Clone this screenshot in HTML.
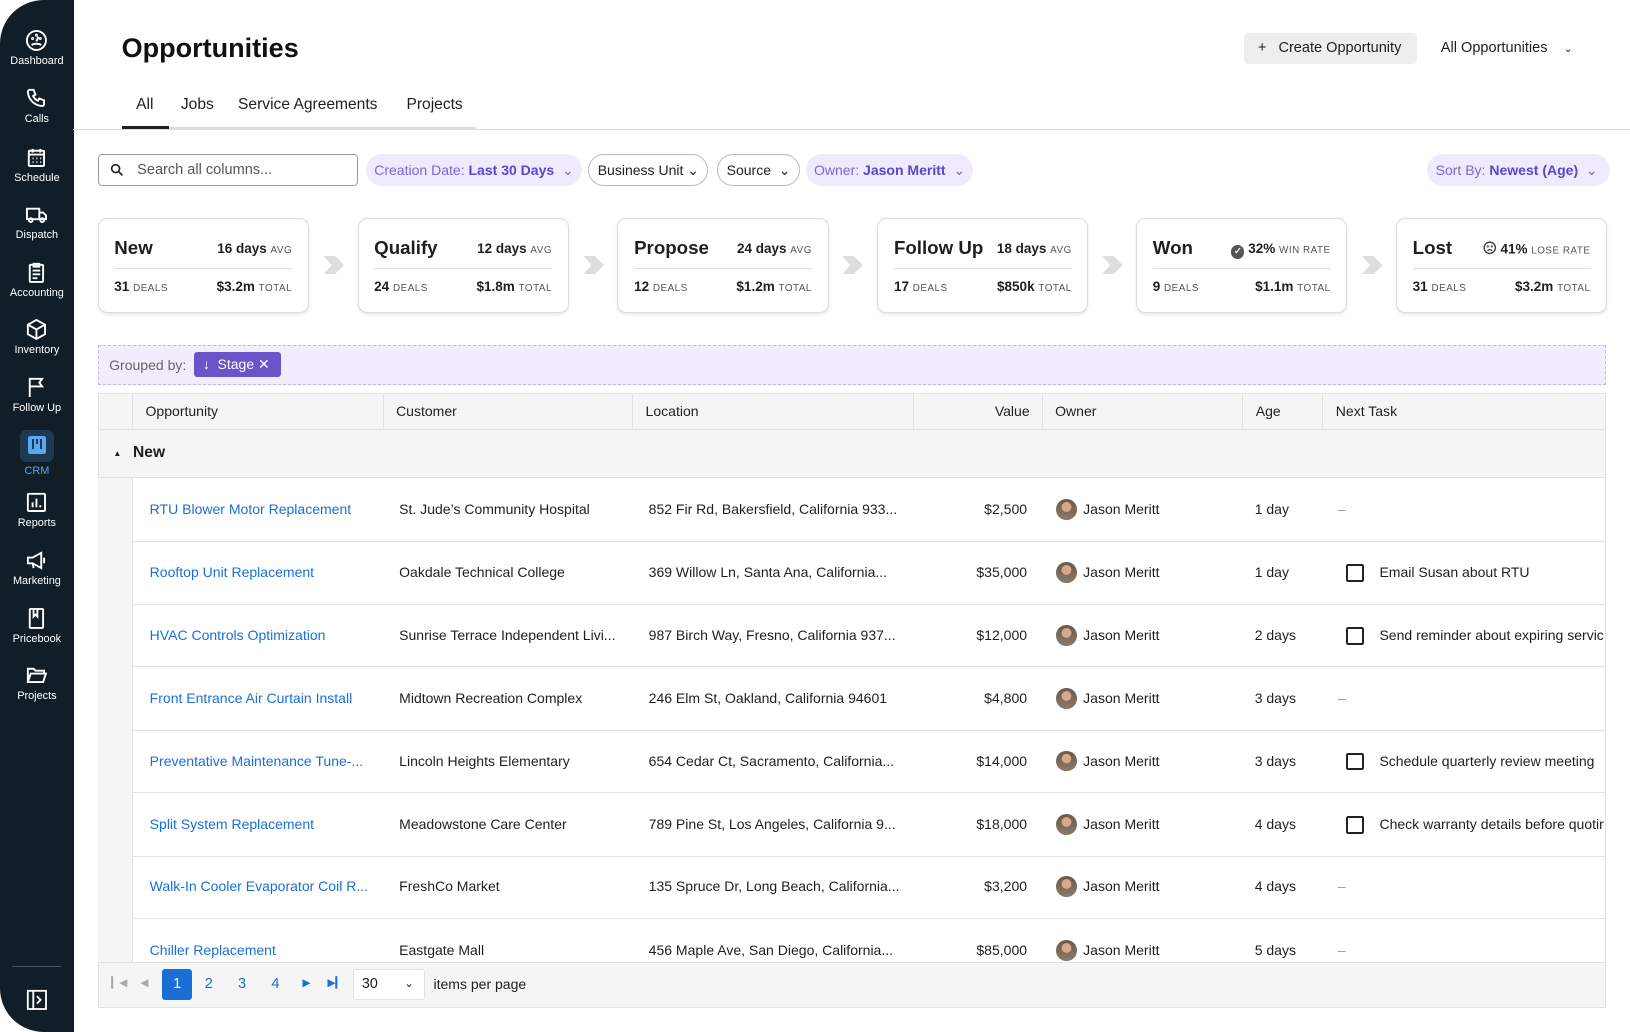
<!DOCTYPE html>
<html><head><meta charset="utf-8"><style>
*{box-sizing:border-box;margin:0;padding:0}
html,body{width:1630px;height:1032px;overflow:hidden;background:#fff}
body{font-family:"Liberation Sans",sans-serif;color:#1f1f1f}
#w{position:absolute;left:0;top:0;width:1568px;height:993px;zoom:1.03954}
.a{position:absolute;white-space:nowrap}
#sb{position:absolute;left:0;top:0;width:71px;height:993px;background:#111e27;border-radius:42px 0 0 42px}
.ni{position:absolute;left:0;width:71px;text-align:center;color:#fff;font-size:10.5px}
.ni svg{display:block;margin:0 auto 3px}
.tab{font-size:15px;top:92px}
.chip{position:absolute;top:148px;height:31px;border-radius:16px;font-size:13.5px;line-height:31px;padding:0 8px;white-space:nowrap}
.pu{background:#efeafd;color:#7a66d9}.pu b{color:#5b46c9}
.ol{border:1px solid #bbb;line-height:29px;color:#222}
.card{position:absolute;top:210px;width:203px;height:91px;border:1px solid #ddd;border-radius:9px;box-shadow:0 1px 3px rgba(0,0,0,.1);background:#fff}
.card .t{position:absolute;left:15px;top:17px;font-size:18px;font-weight:bold}
.card .r{position:absolute;right:15px;top:21px;font-size:13px;font-weight:bold}
.card small{font-size:9.5px;font-weight:normal;color:#555;letter-spacing:.5px}
.card hr{position:absolute;left:15px;right:15px;top:47px;border:0;border-top:1px solid #ddd}
.card .bl{position:absolute;left:15px;top:57px;font-size:13px;font-weight:bold}
.card .br{position:absolute;right:15px;top:57px;font-size:13px;font-weight:bold}
.arr{position:absolute;top:246px;width:20px;height:18px;background:#ddd;clip-path:polygon(0 0,55% 0,100% 50%,55% 100%,0 100%,40% 50%)}
.row{position:absolute;left:94px;width:1451px;height:61px;border-bottom:1px solid #e2e2e2;font-size:13.5px}
.row .g{position:absolute;left:0;top:0;width:34px;height:61px;background:#f5f5f5;border-right:1px solid #e2e2e2}
.row span{position:absolute;top:22px;white-space:nowrap}
.lk{color:#1a6fd6}
.av{width:20px;height:20px;border-radius:50%;background:radial-gradient(circle at 50% 38%,#d7a88a 0 28%,transparent 30%),linear-gradient(#6b5a4c,#8a7a6a);top:20px!important}
.cb{width:17px;height:17px;border:2px solid #222;border-radius:2px;top:22px!important}
.hd{position:absolute;top:379px;font-size:13.5px}
.vd{position:absolute;top:379px;width:1px;height:34px;background:#e2e2e2}
</style></head><body><div id="w">
<div id="sb">
<div class="ni" style="top:28px"><svg width="22" height="22" viewBox="0 0 24 24" fill="none" stroke="#fff" stroke-width="2"><circle cx="12" cy="12" r="10"/><path d="M12 13l2-5M7 17c2-2 8-2 10 0"/><circle cx="8" cy="10" r=".6"/><circle cx="16" cy="10" r=".6"/><circle cx="12" cy="6.5" r=".6"/></svg>Dashboard</div>
<div class="ni" style="top:84px"><svg width="22" height="22" viewBox="0 0 24 24" fill="none" stroke="#fff" stroke-width="2"><path d="M5 3h4l2 5-2.5 1.5a11 11 0 005 5L15 12l5 2v4a2 2 0 01-2 2A16 16 0 013 5a2 2 0 012-2"/></svg>Calls</div>
<div class="ni" style="top:140px"><svg width="22" height="22" viewBox="0 0 24 24" fill="none" stroke="#fff" stroke-width="2"><rect x="4" y="5" width="16" height="16" rx="1"/><path d="M4 9h16M8 3v4M16 3v4M8 13h1M12 13h1M16 13h1M8 17h1M12 17h1M16 17h1"/></svg>Schedule</div>
<div class="ni" style="top:195px"><svg width="24" height="22" viewBox="0 0 24 24" fill="none" stroke="#fff" stroke-width="2"><path d="M2 6h13v11H2zM15 10h4l3 3v4h-7"/><circle cx="6" cy="18" r="2"/><circle cx="18" cy="18" r="2"/></svg>Dispatch</div>
<div class="ni" style="top:251px"><svg width="22" height="22" viewBox="0 0 24 24" fill="none" stroke="#fff" stroke-width="2"><rect x="5" y="4" width="14" height="18" rx="1"/><path d="M9 3h6v3H9zM8 10h8M8 14h8M8 18h5"/></svg>Accounting</div>
<div class="ni" style="top:306px"><svg width="22" height="22" viewBox="0 0 24 24" fill="none" stroke="#fff" stroke-width="2"><path d="M12 2l9 5v10l-9 5-9-5V7zM3 7l9 5 9-5M12 12v10"/></svg>Inventory</div>
<div class="ni" style="top:362px"><svg width="22" height="22" viewBox="0 0 24 24" fill="none" stroke="#fff" stroke-width="2"><path d="M5 22V3h13l-3 4 3 4H5"/></svg>Follow Up</div>
<div class="ni" style="top:414px;color:#5aa6f0"><div style="width:32px;height:30px;margin:0 auto 3px;background:#1e3a52;border-radius:6px;padding:5px 7px"><div style="width:18px;height:18px;background:#5aa6f0;border-radius:2px;position:relative"><i style="position:absolute;left:4px;top:3px;width:2px;height:10px;background:#1e3a52"></i><i style="position:absolute;left:8px;top:3px;width:2px;height:5px;background:#1e3a52"></i><i style="position:absolute;left:12px;top:3px;width:2px;height:10px;background:#1e3a52"></i></div></div>CRM</div>
<div class="ni" style="top:472px"><svg width="22" height="22" viewBox="0 0 24 24" fill="none" stroke="#fff" stroke-width="2"><rect x="3" y="3" width="18" height="18" rx="1"/><path d="M8 17v-5M12 17V8M16 17v-2"/></svg>Reports</div>
<div class="ni" style="top:528px"><svg width="24" height="22" viewBox="0 0 24 24" fill="none" stroke="#fff" stroke-width="2"><path d="M3 9h5l9-5v16l-9-5H3zM8 15l1 5M20 9v6"/></svg>Marketing</div>
<div class="ni" style="top:584px"><svg width="22" height="22" viewBox="0 0 24 24" fill="none" stroke="#fff" stroke-width="2"><rect x="5" y="2" width="14" height="20" rx="1"/><path d="M9 2v8l2-2 2 2V2"/></svg>Pricebook</div>
<div class="ni" style="top:639px"><svg width="22" height="22" viewBox="0 0 24 24" fill="none" stroke="#fff" stroke-width="2"><path d="M3 19V5h6l2 2h9v3M3 19l3-9h16l-3 9z"/></svg>Projects</div>
<div style="position:absolute;left:12px;top:929px;width:47px;height:1px;background:#4a5660"></div>
<svg style="position:absolute;left:25px;top:951px" width="21" height="21" viewBox="0 0 24 24" fill="none" stroke="#fff" stroke-width="2"><rect x="2" y="2" width="20" height="20"/><path d="M8 2v20M12 8l4 4-4 4"/></svg>
</div>

<div class="a" style="left:117px;top:32px;font-size:26px;font-weight:bold;color:#111">Opportunities</div>
<div class="a" style="left:1197px;top:32px;width:166px;height:30px;background:#eee;border-radius:4px;font-size:14px;line-height:30px;padding-left:13px">+&nbsp;&nbsp; Create Opportunity</div>
<div class="a" style="left:1386px;top:38px;font-size:14px">All Opportunities &nbsp;&nbsp;&nbsp;<span style="font-size:10px">&#8964;</span></div>
<div class="a tab" style="left:131px">All</div>
<div class="a tab" style="left:174px">Jobs</div>
<div class="a tab" style="left:229px">Service Agreements</div>
<div class="a tab" style="left:391px">Projects</div>
<div class="a" style="left:70px;top:124px;width:1498px;height:1px;background:#ddd"></div>
<div class="a" style="left:117px;top:122px;width:341px;height:2px;background:#ddd"></div>
<div class="a" style="left:117px;top:121px;width:46px;height:3px;background:#222"></div>

<div class="a" style="left:94px;top:148px;width:250px;height:31px;border:1px solid #999;border-radius:4px;font-size:14px;line-height:29px;color:#555;padding-left:37px">Search all columns...</div>
<svg class="a" style="left:106px;top:157px" width="13" height="13" viewBox="0 0 24 24" fill="none" stroke="#222" stroke-width="3"><circle cx="10" cy="10" r="7"/><path d="M15 15l7 7"/></svg>
<div class="chip pu" style="left:352px">Creation Date: <b>Last 30 Days</b> &nbsp;&#8964;</div>
<div class="chip ol" style="left:566px">Business Unit &#8964;</div>
<div class="chip ol" style="left:690px">Source &nbsp;&#8964;</div>
<div class="chip pu" style="left:775px">Owner: <b>Jason Meritt</b> &nbsp;&#8964;</div>
<div class="chip pu" style="left:1373px;padding:0 12px 0 8px">Sort By: <b>Newest (Age)</b> &nbsp;&#8964;</div>

<div class="card" style="left:94px"><div class="t">New</div><div class="r">16 days <small>AVG</small></div><hr><div class="bl">31 <small>DEALS</small></div><div class="br">$3.2m <small>TOTAL</small></div></div>
<div class="card" style="left:344px"><div class="t">Qualify</div><div class="r">12 days <small>AVG</small></div><hr><div class="bl">24 <small>DEALS</small></div><div class="br">$1.8m <small>TOTAL</small></div></div>
<div class="card" style="left:594px"><div class="t">Propose</div><div class="r">24 days <small>AVG</small></div><hr><div class="bl">12 <small>DEALS</small></div><div class="br">$1.2m <small>TOTAL</small></div></div>
<div class="card" style="left:844px"><div class="t">Follow Up</div><div class="r">18 days <small>AVG</small></div><hr><div class="bl">17 <small>DEALS</small></div><div class="br">$850k <small>TOTAL</small></div></div>
<div class="card" style="left:1093px"><div class="t">Won</div><div class="r"><span style="display:inline-block;width:13px;height:13px;border-radius:50%;background:#555;color:#fff;font-size:9px;text-align:center;line-height:13px;vertical-align:-1px">&#10003;</span> 32% <small>WIN RATE</small></div><hr><div class="bl">9 <small>DEALS</small></div><div class="br">$1.1m <small>TOTAL</small></div></div>
<div class="card" style="left:1343px"><div class="t">Lost</div><div class="r"><svg width="13" height="13" viewBox="0 0 24 24" fill="none" stroke="#444" stroke-width="2.5" style="vertical-align:-1px"><circle cx="12" cy="12" r="10"/><path d="M8 17c2-2 6-2 8 0"/><circle cx="8.5" cy="9.5" r=".8"/><circle cx="15.5" cy="9.5" r=".8"/></svg> 41% <small>LOSE RATE</small></div><hr><div class="bl">31 <small>DEALS</small></div><div class="br">$3.2m <small>TOTAL</small></div></div>
<div class="arr" style="left:311px"></div><div class="arr" style="left:561px"></div><div class="arr" style="left:810px"></div><div class="arr" style="left:1060px"></div><div class="arr" style="left:1310px"></div>

<div class="a" style="left:94px;top:332px;width:1451px;height:38px;background:#f1edfd;border:1px dashed #c4b6f2"></div>
<div class="a" style="left:105px;top:343px;font-size:13.5px;color:#666">Grouped by:</div>
<div class="a" style="left:187px;top:339px;width:83px;height:24px;background:#6a55c8;border-radius:3px;color:#fff;font-size:13.5px;line-height:24px;padding-left:8px">&#8595;&nbsp; Stage &#10005;</div>

<div class="a" style="left:94px;top:378px;width:1451px;height:592px;border:1px solid #e2e2e2;background:#fff"></div>
<div class="a" style="left:94px;top:378px;width:1451px;height:82px;background:#f5f5f5;border:1px solid #e2e2e2"></div>
<div class="a" style="left:94px;top:413px;width:1451px;height:1px;background:#e2e2e2"></div>
<div class="vd" style="left:127px"></div><div class="vd" style="left:368px"></div><div class="vd" style="left:608px"></div><div class="vd" style="left:878px"></div><div class="vd" style="left:1002px"></div><div class="vd" style="left:1195px"></div><div class="vd" style="left:1272px"></div>
<div class="hd" style="left:140px;top:388px">Opportunity</div><div class="hd" style="left:381px;top:388px">Customer</div><div class="hd" style="left:621px;top:388px">Location</div><div class="hd" style="left:957px;top:388px">Value</div><div class="hd" style="left:1015px;top:388px">Owner</div><div class="hd" style="left:1208px;top:388px">Age</div><div class="hd" style="left:1285px;top:388px">Next Task</div>
<div class="a" style="left:109px;top:431px;font-size:8px">&#9650;</div>
<div class="a" style="left:128px;top:427px;font-size:15px;font-weight:bold">New</div>

<div class="row" style="top:460px"><div class="g"></div><span class="lk" style="left:50px">RTU Blower Motor Replacement</span><span style="left:290px">St. Jude’s Community Hospital</span><span style="left:530px">852 Fir Rd, Bakersfield, California 933...</span><span style="right:557px">$2,500</span><span class="av" style="left:922px"></span><span style="left:948px">Jason Meritt</span><span style="left:1113px">1 day</span><span style="left:1193px;color:#999">–</span></div>
<div class="row" style="top:521px"><div class="g"></div><span class="lk" style="left:50px">Rooftop Unit Replacement</span><span style="left:290px">Oakdale Technical College</span><span style="left:530px">369 Willow Ln, Santa Ana, California...</span><span style="right:557px">$35,000</span><span class="av" style="left:922px"></span><span style="left:948px">Jason Meritt</span><span style="left:1113px">1 day</span><span class="cb" style="left:1201px"></span><span style="left:1233px">Email Susan about RTU</span></div>
<div class="row" style="top:581px"><div class="g"></div><span class="lk" style="left:50px">HVAC Controls Optimization</span><span style="left:290px">Sunrise Terrace Independent Livi...</span><span style="left:530px">987 Birch Way, Fresno, California 937...</span><span style="right:557px">$12,000</span><span class="av" style="left:922px"></span><span style="left:948px">Jason Meritt</span><span style="left:1113px">2 days</span><span class="cb" style="left:1201px"></span><span style="left:1233px">Send reminder about expiring servic</span></div>
<div class="row" style="top:642px"><div class="g"></div><span class="lk" style="left:50px">Front Entrance Air Curtain Install</span><span style="left:290px">Midtown Recreation Complex</span><span style="left:530px">246 Elm St, Oakland, California 94601</span><span style="right:557px">$4,800</span><span class="av" style="left:922px"></span><span style="left:948px">Jason Meritt</span><span style="left:1113px">3 days</span><span style="left:1193px;color:#999">–</span></div>
<div class="row" style="top:702px"><div class="g"></div><span class="lk" style="left:50px">Preventative Maintenance Tune-...</span><span style="left:290px">Lincoln Heights Elementary</span><span style="left:530px">654 Cedar Ct, Sacramento, California...</span><span style="right:557px">$14,000</span><span class="av" style="left:922px"></span><span style="left:948px">Jason Meritt</span><span style="left:1113px">3 days</span><span class="cb" style="left:1201px"></span><span style="left:1233px">Schedule quarterly review meeting</span></div>
<div class="row" style="top:763px"><div class="g"></div><span class="lk" style="left:50px">Split System Replacement</span><span style="left:290px">Meadowstone Care Center</span><span style="left:530px">789 Pine St, Los Angeles, California 9...</span><span style="right:557px">$18,000</span><span class="av" style="left:922px"></span><span style="left:948px">Jason Meritt</span><span style="left:1113px">4 days</span><span class="cb" style="left:1201px"></span><span style="left:1233px">Check warranty details before quotir</span></div>
<div class="row" style="top:823px"><div class="g"></div><span class="lk" style="left:50px">Walk-In Cooler Evaporator Coil R...</span><span style="left:290px">FreshCo Market</span><span style="left:530px">135 Spruce Dr, Long Beach, California...</span><span style="right:557px">$3,200</span><span class="av" style="left:922px"></span><span style="left:948px">Jason Meritt</span><span style="left:1113px">4 days</span><span style="left:1193px;color:#999">–</span></div>
<div class="row" style="top:884px;height:41px;border:0;overflow:hidden"><div class="g"></div><span class="lk" style="left:50px">Chiller Replacement</span><span style="left:290px">Eastgate Mall</span><span style="left:530px">456 Maple Ave, San Diego, California...</span><span style="right:557px">$85,000</span><span class="av" style="left:922px"></span><span style="left:948px">Jason Meritt</span><span style="left:1113px">5 days</span><span style="left:1193px;color:#999">–</span></div>

<div class="a" style="left:94px;top:925px;width:1451px;height:45px;background:#f5f5f5;border:1px solid #e2e2e2"></div>
<div class="a" style="left:107px;top:940px;font-size:10px;color:#aaa">&#9614;&#9664;</div>
<div class="a" style="left:135px;top:940px;font-size:10px;color:#aaa">&#9664;</div>
<div class="a" style="left:156px;top:932px;width:29px;height:30px;background:#1a6fd6;border-radius:3px;color:#fff;font-size:14px;line-height:30px;text-align:center">1</div>
<div class="a" style="left:197px;top:939px;font-size:14px;color:#1a6fd6">2</div>
<div class="a" style="left:229px;top:939px;font-size:14px;color:#1a6fd6">3</div>
<div class="a" style="left:261px;top:939px;font-size:14px;color:#1a6fd6">4</div>
<div class="a" style="left:291px;top:940px;font-size:10px;color:#1a6fd6">&#9654;</div>
<div class="a" style="left:315px;top:940px;font-size:10px;color:#1a6fd6">&#9654;&#9614;</div>
<div class="a" style="left:340px;top:932px;width:69px;height:30px;background:#fff;border:1px solid #e2e2e2;border-radius:3px;font-size:14px;line-height:28px;padding-left:7px">30 <span style="position:absolute;right:10px;font-size:11px">&#8964;</span></div>
<div class="a" style="left:417px;top:939px;font-size:13.5px">items per page</div>
</div></body></html>
